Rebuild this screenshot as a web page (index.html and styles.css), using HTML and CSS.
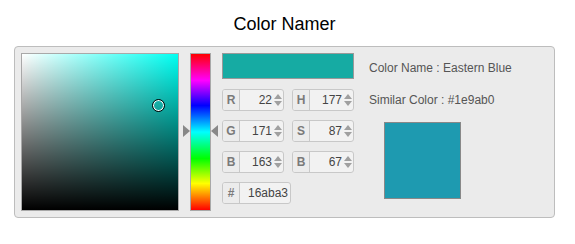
FILE: index.html
```html
<!DOCTYPE html>
<html lang="en">
<head>
    <meta charset="UTF-8">
    <meta name="viewport" content="width=device-width, initial-scale=1.0">
    <title>Color Namer</title>
    <link rel="stylesheet" href="styles.css">
</head>
<body>
    <div class="app">
        <h1 class="title">Color Namer</h1>
        <div class="picker">
            <div class="sv" id="sv">
                <span class="sv-cursor"></span>
            </div>
            <div class="hue-wrap">
                <div class="hue"></div>
                <span class="arrow arrow-left"></span>
                <span class="arrow arrow-right"></span>
            </div>
            <div class="controls">
                <div class="current"></div>
                <div class="fields">
                    <div class="field"><span class="lbl">R</span><span class="val">22</span><span class="spin"><i class="up"></i><i class="down"></i></span></div>
                    <div class="field"><span class="lbl">H</span><span class="val">177</span><span class="spin"><i class="up"></i><i class="down"></i></span></div>
                    <div class="field"><span class="lbl">G</span><span class="val">171</span><span class="spin"><i class="up"></i><i class="down"></i></span></div>
                    <div class="field"><span class="lbl">S</span><span class="val">87</span><span class="spin"><i class="up"></i><i class="down"></i></span></div>
                    <div class="field"><span class="lbl">B</span><span class="val">163</span><span class="spin"><i class="up"></i><i class="down"></i></span></div>
                    <div class="field"><span class="lbl">B</span><span class="val">67</span><span class="spin"><i class="up"></i><i class="down"></i></span></div>
                    <div class="field hex"><span class="lbl">#</span><span class="val">16aba3</span></div>
                </div>
            </div>
            <div class="info">
                <div class="name">Color Name : Eastern Blue</div>
                <div class="similar">Similar Color : #1e9ab0</div>
                <div class="similar-swatch"></div>
            </div>
        </div>
    </div>
</body>
</html>
```

FILE: styles.css
```css
*{
    box-sizing: border-box;
}
body{
    margin: 0;
    padding: 0;
    background-color: #fff;
    font-family: 'Liberation Sans', Arial, Helvetica, sans-serif;
}
.app{
    width: 541px;
    margin-left: 14px;
}
.title{
    margin: 0;
    padding-top: 14px;
    font-size: 18px;
    line-height: 20px;
    font-weight: normal;
    text-align: center;
    color: #000;
}
.picker{
    margin-top: 12px;
    display: flex;
    align-items: flex-start;
    background-color: #ebebeb;
    border: 1px solid #bdbdbd;
    border-radius: 4px;
    padding: 6px;
}
.sv{
    position: relative;
    width: 158px;
    height: 158px;
    border: 1px solid #a8a8a8;
    background:
        linear-gradient(to bottom, rgba(0,0,0,0), #000),
        linear-gradient(to right, #fff, rgba(255,255,255,0)),
        rgb(0, 255, 242);
}
.sv-cursor{
    position: absolute;
    left: 130px;
    top: 45px;
    width: 13px;
    height: 13px;
    border-radius: 50%;
    border: 1px solid #000;
    box-shadow: inset 0 0 0 1px #fff;
}
.hue-wrap{
    position: relative;
    margin: 0 4px;
    padding: 0 7px;
}
.hue{
    width: 21px;
    height: 158px;
    border: 1px solid #a8a8a8;
    background: linear-gradient(to bottom, #f00 0%, #f0f 17%, #00f 33%, #0ff 50%, #0f0 67%, #ff0 83%, #f00 100%);
}
.arrow{
    position: absolute;
    top: 72px;
    width: 0;
    height: 0;
    border-top: 6px solid transparent;
    border-bottom: 6px solid transparent;
}
.arrow-left{
    left: 0;
    border-left: 7px solid #888;
}
.arrow-right{
    right: 0;
    border-right: 7px solid #888;
}
.controls{
    width: 132px;
}
.current{
    height: 26px;
    background-color: #16aba3;
    border: 1px solid #999;
}
.fields{
    margin-top: 10px;
    display: grid;
    grid-template-columns: 62px 62px;
    column-gap: 8px;
    row-gap: 9px;
}
.field{
    display: flex;
    height: 22px;
    border: 1px solid #c8c8c8;
    border-radius: 3px;
    background-color: #f2f2f2;
    font-size: 12px;
    line-height: 20px;
    overflow: hidden;
}
.field .lbl{
    width: 17px;
    flex: none;
    text-align: center;
    font-weight: bold;
    color: #7a7a7a;
    background-color: #ececec;
    border-right: 1px solid #c8c8c8;
}
.field .val{
    flex: 1;
    text-align: right;
    color: #444;
}
.spin{
    width: 11px;
    flex: none;
    display: flex;
    flex-direction: column;
    align-items: center;
    justify-content: center;
    gap: 2px;
}
.spin i{
    width: 0;
    height: 0;
    border-left: 4px solid transparent;
    border-right: 4px solid transparent;
}
.spin .up{
    border-bottom: 5px solid #a0a0a0;
}
.spin .down{
    border-top: 5px solid #a0a0a0;
}
.field.hex{
    width: 69px;
}
.field.hex .val{
    text-align: left;
    padding-left: 8px;
}
.info{
    margin-left: 15px;
    padding-top: 8px;
    font-size: 12px;
    line-height: 14px;
    color: #555;
}
.similar{
    margin-top: 18px;
}
.similar-swatch{
    margin-top: 15px;
    margin-left: 15px;
    width: 77px;
    height: 77px;
    background-color: #1e9ab0;
    border: 1px solid #888;
}
```
